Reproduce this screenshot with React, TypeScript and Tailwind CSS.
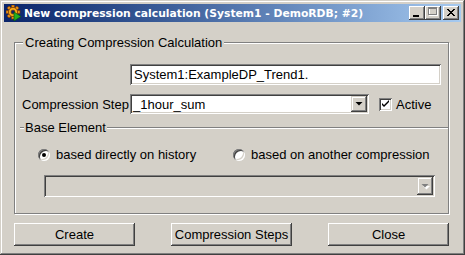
import React from "react";

function AppIcon() {
  return (
    <svg width="16" height="16" viewBox="0 0 16 16">
      <g transform="translate(7 7)">
        {[0, 45, 90, 135, 180, 225, 270, 315].map((a) => (
          <rect key={a} x="-1.5" y="-7" width="3" height="4" fill="#e89018" stroke="#7a3a00" strokeWidth="0.6" transform={`rotate(${a})`} />
        ))}
        <circle r="4.6" fill="#f4a81c" stroke="#7a3a00" strokeWidth="0.8" />
        <circle r="2" fill="#0a246a" stroke="#7a3a00" strokeWidth="0.6" />
      </g>
      <path d="M8 7 L15 11.5 L8 16 Z" fill="#22b022" stroke="#0a5a0a" strokeWidth="0.7" />
    </svg>
  );
}

function CaptionButton({ kind }: { kind: "min" | "max" | "close" }) {
  return (
    <div className="w-[16px] h-[14px] bg-[#d4d0c8] shadow-[inset_-1px_-1px_#404040,inset_1px_1px_#ffffff,inset_-2px_-2px_#808080] flex items-center justify-center">
      <svg width="16" height="14" viewBox="0 0 16 14">
        {kind === "min" && <rect x="4" y="9" width="6" height="2" fill="#000" />}
        {kind === "max" && (
          <g>
            <rect x="4.5" y="2.5" width="8" height="7" fill="none" stroke="#ffffff" />
            <rect x="3.5" y="1.5" width="8" height="7" fill="none" stroke="#808080" />
            <rect x="3" y="2" width="9" height="1" fill="#808080" />
          </g>
        )}
        {kind === "close" && (
          <path d="M4 3 L11 10 M5 3 L12 10 M11 3 L4 10 M12 3 L5 10" stroke="#000" strokeWidth="1" shapeRendering="crispEdges" />
        )}
      </svg>
    </div>
  );
}

function DropArrow({ disabled }: { disabled?: boolean }) {
  return (
    <div className="w-[16px] h-full bg-[#d4d0c8] shadow-[inset_-1px_-1px_#404040,inset_1px_1px_#d4d0c8,inset_-2px_-2px_#808080,inset_2px_2px_#ffffff] flex items-center justify-center">
      <svg width="16" height="10" viewBox="0 0 16 10">
        {disabled && <path d="M6 5 H13 L9.5 8.5 Z" fill="#ffffff" />}
        <path d="M4.5 3 H11.5 L8 6.5 Z" fill={disabled ? "#808080" : "#000"} />
      </svg>
    </div>
  );
}

function Radio({ checked }: { checked?: boolean }) {
  return (
    <div className="w-[12px] h-[12px] rounded-full bg-white shadow-[inset_1px_1px_#808080,inset_-1px_-1px_#ffffff,inset_2px_2px_#404040,inset_-2px_-2px_#d4d0c8] flex items-center justify-center">
      {checked && <div className="w-[4px] h-[4px] rounded-full bg-black" />}
    </div>
  );
}

function Button({ label }: { label: string }) {
  return (
    <button className="w-[121px] h-[23px] bg-[#d4d0c8] shadow-[inset_-1px_-1px_#404040,inset_1px_1px_#ffffff,inset_-2px_-2px_#808080] text-[13px] leading-[15px] text-black">
      {label}
    </button>
  );
}

export default function App() {
  return (
    <div className="w-[465px] h-[255px] bg-[#d4d0c8] p-[4px] shadow-[inset_-1px_-1px_#404040,inset_1px_1px_#d4d0c8,inset_-2px_-2px_#808080,inset_2px_2px_#ffffff] font-['Liberation_Sans',Arial,sans-serif] text-[13px] leading-[15px] text-black">
      {/* title bar */}
      <div className="h-[18px] flex items-center px-[2px] bg-gradient-to-r from-[#0a246a] to-[#a6caf0]">
        <AppIcon />
        <span className="ml-[2px] text-white font-bold text-[10.75px] font-['DejaVu_Sans',sans-serif] leading-[13px]">
          New compression calculation (System1 - DemoRDB; #2)
        </span>
        <div className="ml-auto flex items-center">
          <CaptionButton kind="min" />
          <CaptionButton kind="max" />
          <div className="ml-[2px]">
            <CaptionButton kind="close" />
          </div>
        </div>
      </div>

      <div className="pl-[10px] pr-[12px]">
        <fieldset className="mt-[13px] border border-[#808080] shadow-[1px_1px_0_#ffffff,inset_1px_1px_0_#ffffff]">
          <legend className="ml-[8px] px-[2px] bg-[#d4d0c8]">Creating Compression Calculation</legend>
          <div className="pt-[14px] pb-[16px]">
            <div className="flex items-center pl-[7px] pr-[7px]">
              <span className="w-[108px]">Datapoint</span>
              <div className="flex-1 h-[21px] bg-white px-[4px] flex items-center shadow-[inset_1px_1px_#808080,inset_-1px_-1px_#ffffff,inset_2px_2px_#404040,inset_-2px_-2px_#d4d0c8]">
                System1:ExampleDP_Trend1.
              </div>
            </div>

            <div className="flex items-center pl-[7px] mt-[9px]">
              <span className="w-[108px]">Compression Step</span>
              <div className="w-[239px] h-[20px] bg-white p-[2px] flex items-center shadow-[inset_1px_1px_#808080,inset_-1px_-1px_#ffffff,inset_2px_2px_#404040,inset_-2px_-2px_#d4d0c8]">
                <span className="flex-1 pl-[1px]">_1hour_sum</span>
                <DropArrow />
              </div>
              <div className="ml-[10px] w-[13px] h-[13px] bg-white flex items-center justify-center shadow-[inset_1px_1px_#808080,inset_-1px_-1px_#ffffff,inset_2px_2px_#404040,inset_-2px_-2px_#d4d0c8]">
                <svg width="13" height="13" viewBox="0 0 13 13">
                  <path d="M3 5 L3 7 L5 9 L10 4 L10 2 L5 7 Z" fill="#000" />
                </svg>
              </div>
              <span className="ml-[4px]">Active</span>
            </div>

            <div className="flex items-center ml-[5px] mt-[6px] h-[15px]">
              <div className="w-[4px] h-[2px] border-t border-[#808080] border-b border-b-white" />
              <span className="px-[1px]">Base Element</span>
              <div className="flex-1 h-[2px] border-t border-[#808080] border-b border-b-white" />
            </div>

            <div className="flex items-center pl-[23px] mt-[12px] h-[15px]">
              <div className="w-[195px] flex items-center">
                <Radio checked />
                <span className="ml-[6px]">based directly on history</span>
              </div>
              <Radio />
              <span className="ml-[6px]">based on another compression</span>
            </div>

            <div className="ml-[29px] mr-[13px] mt-[13px] h-[22px] p-[2px] flex justify-end bg-[#d4d0c8] shadow-[inset_1px_1px_#808080,inset_-1px_-1px_#ffffff,inset_2px_2px_#404040,inset_-2px_-2px_#d4d0c8]">
              <DropArrow disabled />
            </div>
          </div>
        </fieldset>

        <div className="mt-[9px] flex justify-between">
          <Button label="Create" />
          <Button label="Compression Steps" />
          <Button label="Close" />
        </div>
      </div>
    </div>
  );
}
